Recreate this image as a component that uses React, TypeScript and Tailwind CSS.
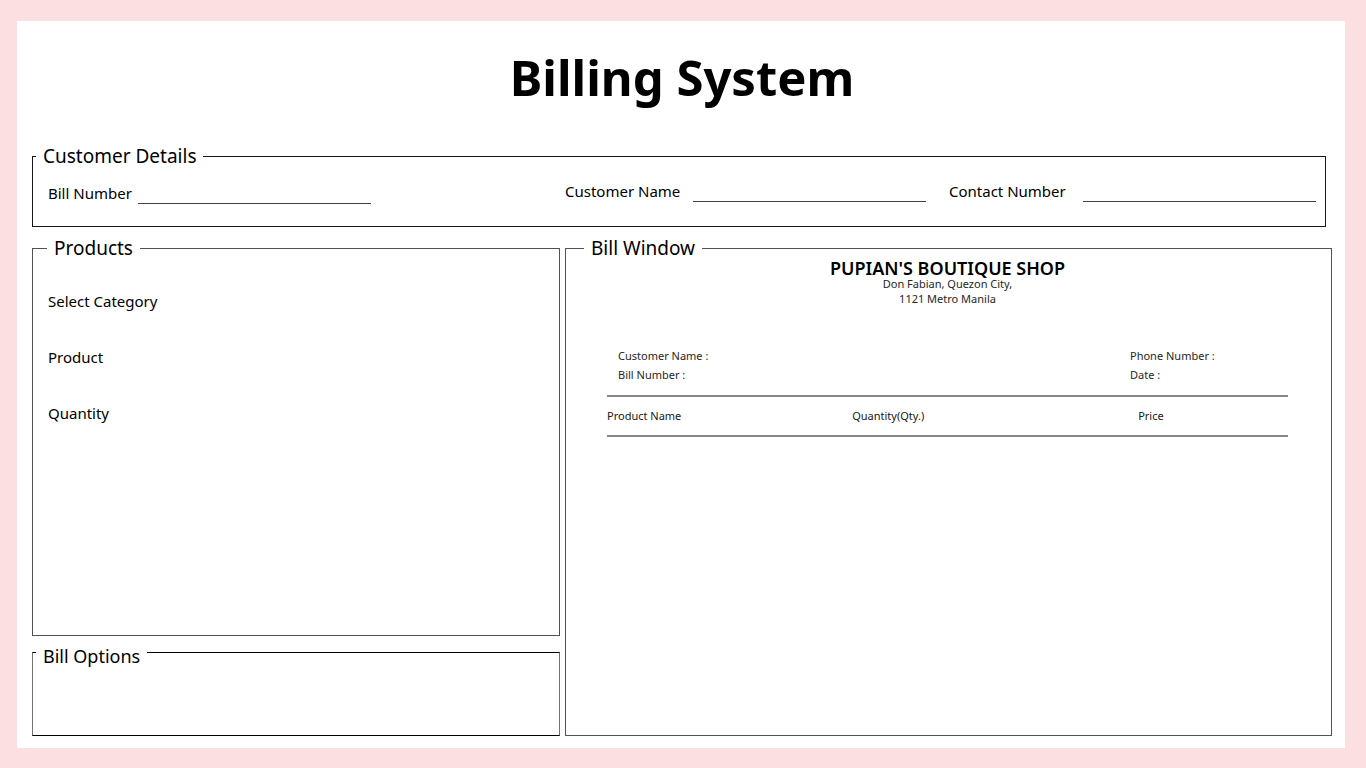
import type { ReactNode } from "react";

const legendText = "px-[7px] text-[19px] leading-6";

function LineField({ id, label, labelWidth }: { id: string; label: string; labelWidth: string }) {
  return (
    <div className="flex items-start">
      <label htmlFor={id} className={`${labelWidth} shrink-0 whitespace-nowrap leading-6`}>
        {label}
      </label>
      <input
        id={id}
        type="text"
        className="h-[23px] w-[233px] min-w-0 border-b border-neutral-700 bg-transparent outline-none"
      />
    </div>
  );
}

function ProductField({ id, label }: { id: string; label: string }) {
  return (
    <div className="flex gap-6">
      <label htmlFor={id} className="w-32 leading-6">
        {label}
      </label>
      <input id={id} type="text" className="h-6 min-w-0 flex-1 bg-transparent outline-none" />
    </div>
  );
}

function HeadCell({ width, children }: { width: string; children: ReactNode }) {
  return (
    <th scope="col" className={`${width} h-10 p-0 text-left font-normal text-neutral-900`}>
      {children}
    </th>
  );
}

export default function App() {
  return (
    <div className="flex min-h-screen bg-[#fcdfe0] pt-[21px] pr-[21px] pb-5 pl-[17px] font-['Noto_Sans',sans-serif] text-[15px] text-black">
      <main className="flex flex-1 flex-col bg-white pt-[23px] pr-[13px] pb-3 pl-[15px]">
        <h1 className="text-center text-[49px] leading-[66px] font-bold">Billing System</h1>

        <fieldset className="mt-[34px] mr-[6px] h-[83px] border border-neutral-900 px-[3px]">
          <legend className={legendText}>Customer Details</legend>
          <div className="grid grid-cols-[517fr_384fr_367fr] pt-[11px] pr-[6px] pl-3">
            <div className="pt-[2px]">
              <LineField id="bill-number" label="Bill Number" labelWidth="w-[90px]" />
            </div>
            <LineField id="customer-name" label="Customer Name" labelWidth="w-32" />
            <LineField id="contact-number" label="Contact Number" labelWidth="w-[134px]" />
          </div>
        </fieldset>

        <div className="mt-[9px] grid flex-1 grid-cols-[528fr_767fr] gap-[5px]">
          <div className="flex flex-col">
            <fieldset className="flex-1 border border-neutral-600 px-[14px]">
              <legend className={legendText}>Products</legend>
              <div className="flex flex-col gap-8 pt-[29px] pl-px">
                <ProductField id="category" label="Select Category" />
                <ProductField id="product" label="Product" />
                <ProductField id="quantity" label="Quantity" />
              </div>
            </fieldset>
            <fieldset className="h-[100px] border border-x-neutral-500 border-y-black px-[3px]">
              <legend className="px-[7px] pt-2 text-[18px] leading-6">Bill Options</legend>
            </fieldset>
          </div>

          <fieldset className="border border-neutral-600 px-[18px]">
            <legend className={legendText}>Bill Window</legend>
            <div className="pr-[25px] pl-[23px] text-[11px] text-neutral-800">
              <header className="text-center leading-[15px]">
                <h2 className="text-[18px] leading-4 font-semibold text-black">PUPIAN'S BOUTIQUE SHOP</h2>
                <p>Don Fabian, Quezon City,</p>
                <p>1121 Metro Manila</p>
              </header>
              <div className="mt-10 grid grid-cols-[512fr_147fr] px-[11px] leading-[19px]">
                <p>Customer Name :</p>
                <p>Phone Number :</p>
                <p>Bill Number :</p>
                <p>Date :</p>
              </div>
              <table className="mt-[11px] w-full table-fixed border-collapse border-y-2 border-[#868686]">
                <thead>
                  <tr>
                    <HeadCell width="w-[36%]">Product Name</HeadCell>
                    <HeadCell width="w-[42%]">Quantity(Qty.)</HeadCell>
                    <HeadCell width="w-[22%]">Price</HeadCell>
                  </tr>
                </thead>
              </table>
            </div>
          </fieldset>
        </div>
      </main>
    </div>
  );
}
